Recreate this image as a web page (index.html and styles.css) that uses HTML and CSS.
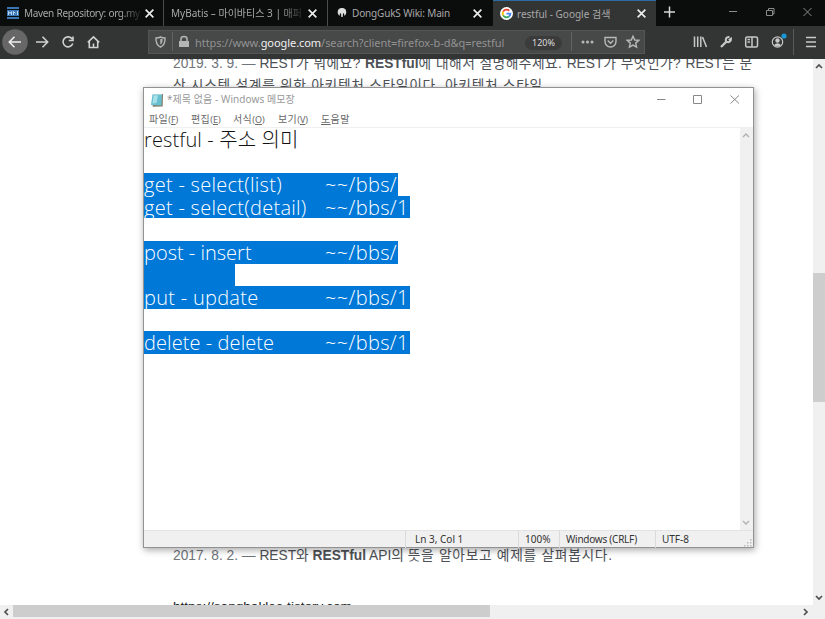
FILE: index.html
```html
<!DOCTYPE html>
<html lang="ko">
<head>
<meta charset="utf-8">
<title>restful - Google 검색</title>
<link rel="stylesheet" href="styles.css">
</head>
<body>
<div class="browser">
  <div class="tabs">
    <div class="tab t1">
      <svg class="fav" viewBox="0 0 12 12"><path fill="#3976b5" d="M0 0h12v2H0zM0 3h12v6H0zM0 10h12v2H0z"/><path stroke="#b9d7f2" fill="none" d="M1.500 8V4.500l1.500 2 1.500-2V8M6.500 8V4.500l2 2M10.500 4v4"/></svg>
      <span class="label fade">Maven Repository: org.my</span>
      <svg class="x" viewBox="0 0 10 10"><path d="M1.500 1.500l7 7m0-7l-7 7"/></svg>
    </div>
    <div class="tab t2">
      <span class="label fade">MyBatis – 마이바티스 3 | 매퍼</span>
      <svg class="x" viewBox="0 0 10 10"><path d="M1.500 1.500l7 7m0-7l-7 7"/></svg>
    </div>
    <div class="tab t3">
      <svg class="fav" viewBox="0 0 12 12"><path fill="#ddd" d="M2 7C1 3 3 1 6 1s5 2 4 6L8.500 9 8 6.500 7 6.200 6.700 10H5.300L5 6.200 4 6.500 3.500 9z"/></svg>
      <span class="label">DongGukS Wiki: Main</span>
      <svg class="x" viewBox="0 0 10 10"><path d="M1.500 1.500l7 7m0-7l-7 7"/></svg>
    </div>
    <div class="tab t4 active">
      <svg class="fav g" viewBox="0 0 14 14"><circle cx="7" cy="7" r="7" fill="#fff"/><g fill="none" stroke-width="2"><path stroke="#ea4335" d="M3.400 5A4.200 4.200 0 0 1 10 4"/><path stroke="#fbbc05" d="M3.400 5a4.200 4.200 0 0 0 0 4"/><path stroke="#34a853" d="M3.400 9A4.200 4.200 0 0 0 9.700 10.200"/><path stroke="#4285f4" d="M9.700 10.200A4.200 4.200 0 0 0 11.200 7.200H7"/></g></svg>
      <span class="label">restful - Google 검색</span>
      <svg class="x" viewBox="0 0 10 10"><path d="M1.500 1.500l7 7m0-7l-7 7"/></svg>
    </div>
    <svg class="winbtns" width="169" height="26" viewBox="656 0 169 26"><path stroke="#d8d8d8" stroke-width="1.500" d="M669.500 6.500v11M664 12h11"/><g fill="none" stroke="#8b8b8b"><path d="M729 11.500h8M766.500 10.500h6v5h-6zM768.500 10V8.500h5.500V14H773M803.500 8l8 8m0-8l-8 8"/></g></svg>
  </div>
  <div class="toolbar">
    <svg class="nav" width="148" height="32" viewBox="0 26 148 32" fill="none" stroke="#d0d0d0" stroke-width="1.600"><circle cx="15" cy="42" r="12.800" fill="#676767" stroke="none"/><path stroke="#eee" d="M21 42H9.500M14.500 36.800L9.300 42l5.200 5.200"/><path d="M36 42h11.500M42.500 36.800l5.200 5.200-5.200 5.200"/><path d="M72.200 39A5 5 0 1 0 72.800 43.500M73 36.500v4h-4.200"/><path d="M87.800 42.300l5.700-5.500 5.700 5.500M89.300 41.500v6h8.400v-6M93.500 47.500v-4"/></svg>
    <div class="url">
      <svg width="47" height="24" viewBox="148 30 47 24"><path fill="none" stroke="#b5b5b5" stroke-width="1.400" d="M156 38q2.500 0 4.500-1 2 1 4.500 1c.3 5-1 7.500-4.500 9.200-3.500-1.700-4.800-4.200-4.500-9.200z"/><path fill="#b5b5b5" d="M160.300 39h2.300c0 3-.5 4.500-2.300 5.500z"/><path stroke="#626262" d="M172.500 32v19"/><path fill="#b5b5b5" d="M179 41h10v6h-10z"/><path fill="none" stroke="#b5b5b5" stroke-width="1.500" d="M181 41v-2a3 2.500 0 0 1 6 0v2"/></svg>
      <span class="addr">https://www.<b>google.com</b>/search?client=firefox-b-d&amp;q=restful</span>
      <span class="zoom">120%</span>
      <svg class="acts" width="76" height="24" viewBox="569 30 76 24" fill="none" stroke="#b8b8b8" stroke-width="1.400"><path stroke="#626262" stroke-width="1" d="M571.500 32v19"/><g fill="#b8b8b8" stroke="none"><circle cx="583" cy="42" r="1.500"/><circle cx="587.500" cy="42" r="1.500"/><circle cx="592" cy="42" r="1.500"/></g><path d="M605 37.500h11v4a5.500 5.500 0 0 1-11 0zM607.700 40.500l2.800 2.700 2.800-2.700"/><path d="M633 36.200l1.700 3.800 4.100.4-3.100 2.700.9 4.100-3.600-2.100-3.600 2.100.9-4.100-3.100-2.700 4.100-.4z"/></svg>
    </div>
    <svg class="tools" width="180" height="32" viewBox="645 26 180 32" fill="none" stroke="#c8c8c8" stroke-width="1.500"><path d="M694.500 36.500v10.500M697.700 36.500v10.500M700.800 36.500v10.500M702.500 37l4 10"/><path stroke-width="2.300" d="M721 47l5.500-5.500"/><path stroke-width="2" d="M729.500 37c-3-.5-4.500 2-3.200 4.700 2.500 1.200 5-.2 4.700-3l-2.200 1.500"/><rect x="745.700" y="37" width="11.800" height="10" rx="1.500"/><path d="M752 37v10M747.500 39.500h2.500M747.500 42h2.500"/><circle cx="777.500" cy="42" r="5.200" stroke-width="1.200"/><circle cx="777.500" cy="40.500" r="2.200" fill="#c8c8c8" stroke="none"/><path fill="#c8c8c8" stroke="none" d="M774 45q3.500-3.500 7 0-3.500 3-7 0z"/><circle cx="784" cy="36" r="2.600" fill="#1898d2" stroke="none"/><path stroke="#5a5a5a" stroke-width="1" d="M793.500 29v26"/><path stroke-width="1.600" d="M806 37.500h10M806 42h10M806 46.500h10"/></svg>
  </div>
</div>
<div class="view">
  <div class="page">
    <p class="r1">2019. 3. 9. — <span class="dk">REST<span class="k">가 뭐에요? </span><b>RESTful</b><span class="k">에 대해서 설명해주세요. </span>REST<span class="k">가 무엇인가? </span>REST<span class="k">는 분</span></span></p>
    <p class="r2">산 시스템 설계를 위한 아키텍처 스타일이다. 아키텍처 스타일</p>
    <p class="r3">2017. 8. 2. — <span class="dk">REST와 <b>RESTful</b> API의 <span class="k2">뜻을 알아보고 예제를 살펴봅시다.</span></span></p>
    <p class="r4">https://sanghaklee.tistory.com <span>› ...</span></p>
  </div>
  <div class="vbar"><svg viewBox="0 0 12 14"><path d="M3 9l3-3 3 3"/></svg><div class="vthumb"></div><svg viewBox="0 0 12 14"><path d="M3 5l3 3 3-3"/></svg></div>
</div>
<div class="hbar"><svg viewBox="0 0 12 14"><path d="M8 4L5 7l3 3"/></svg><div class="hthumb"></div><svg class="right" viewBox="0 0 12 14"><path d="M4 4l3 3-3 3"/></svg></div>

<div class="notepad">
  <div class="title">
    <svg width="14" height="14" viewBox="0 0 14 14"><path fill="#867d68" d="M3 1.500l10-.5-.3 12.500-10 .2z"/><path fill="#68bfd0" d="M2.500 1.200L12 1l-.6 11.500L1 12z"/><path fill="#a7e0e8" d="M3.500 2.500L8 2.300 6.500 10l-4 .5z"/><path stroke="#d8edf0" stroke-dasharray="1 1" d="M2.500 1.500H12"/></svg>
    <span>*제목 없음 - Windows 메모장</span>
    <svg class="wb" width="90" height="20" viewBox="653 89 90 20" fill="none" stroke="#888"><path d="M657 98.500h8.500M693.500 94.500h8v8h-8zM730.500 94.500l8.500 8m0-8l-8.500 8"/></svg>
  </div>
  <div class="menu"><span class="m1">파일<i>(<u>F</u>)</i></span><span class="m2">편집<i>(<u>E</u>)</i></span><span class="m3">서식<i>(<u>O</u>)</i></span><span class="m4">보기<i>(<u>V</u>)</i></span><span class="m5"><u>도</u>움말</span></div>
  <div class="body">
    <div class="text">
      <div class="line head">restful - 주소 의미</div>
      <div class="line"></div>
      <div class="line"><div class="sel"><span class="a">get - select(list)</span><span class="p">~~/bbs/</span></div></div>
      <div class="line"><div class="sel long"><span class="a">get - select(detail)</span><span class="p">~~/bbs/1</span></div></div>
      <div class="line"></div>
      <div class="line"><div class="sel"><span>post - insert</span><span class="p">~~/bbs/</span></div></div>
      <div class="line"><div class="sel tabonly"></div></div>
      <div class="line"><div class="sel long"><span class="a">put - update</span><span class="p">~~/bbs/1</span></div></div>
      <div class="line"></div>
      <div class="line"><div class="sel long"><span class="e">delete - delete</span><span class="p">~~/bbs/1</span></div></div>
    </div>
    <div class="nbar"><svg viewBox="0 0 12 14"><path d="M3 9l3-3 3 3"/></svg><svg viewBox="0 0 12 14"><path d="M3 5l3 3 3-3"/></svg></div>
  </div>
  <div class="status"><span></span><span class="s1">Ln 3, Col 1</span><span class="s2">100%</span><span class="s3">Windows (CRLF)</span><span class="s4">UTF-8</span><svg width="9" height="9" viewBox="0 0 9 9"><path fill="#bbb" d="M6 0h1.500v1.500H6zM3 3h1.500v1.500H3zM6 3h1.500v1.500H6zM0 6h1.500v1.500H0zM3 6h1.500v1.500H3zM6 6h1.500v1.500H6z"/></svg></div>
</div>
</body>
</html>
```
FILE: styles.css
```css
* { box-sizing: border-box; }
body { margin: 0; width: 825px; height: 619px; overflow: hidden; background: #fff; font-family: "Open Sans", "Noto Sans CJK KR", sans-serif; display: flex; flex-direction: column; }
svg { display: block; flex: none; }
p { margin: 0; }
.tabs { height: 26px; background: #0b0c0c; display: flex; }
.tab { display: flex; align-items: center; border-right: 1px solid #4c4c4c; color: #a8a8a8; font: 10px/26px "Noto Sans", "Noto Sans CJK KR", sans-serif; padding-right: 9px; }
.tab .label { flex: 1; white-space: nowrap; overflow: hidden; }
.fade { mask-image: linear-gradient(90deg, #000 80%, transparent 100%); }
.tab.t1 { width: 164px; padding-left: 7px; padding-right: 8px; }
.t1 .label { letter-spacing: -0.350px; word-spacing: 0.500px; }
.t2 { width: 164px; padding-left: 7px; }
.tab.t3 { width: 165px; padding-left: 8px; padding-right: 10px; border: 0; }
.t4 { width: 163px; padding-left: 7px; }
.fav { width: 12px; height: 12px; margin-right: 5px; }
.t3 .fav { margin-right: 4px; }
.t3 .label { letter-spacing: -0.160px; }
.fav.g { width: 13px; height: 13px; margin-right: 4px; }
.x { width: 11px; height: 11px; stroke: #eee; stroke-width: 1.500; }
.active { background: #333434; border: 0; border-top: 1px solid #2b6ca3; }
.toolbar { height: 33px; background: #333434; display: flex; padding-bottom: 1px; }
.url { width: 497px; height: 24px; margin-top: 4px; background: #474848; border: 1px solid #555; display: flex; align-items: center; }
.url svg { margin: -1px 0 0 -1px; }
.addr { font: 11px/22px "Noto Sans", sans-serif; letter-spacing: -0.060px; color: #929292; width: 330px; margin-top: 1px; white-space: nowrap; }
.addr b { font-weight: 400; color: #f0f0f0; }
.zoom { width: 37px; height: 14px; margin-top: 1px; border-radius: 7px; background: #3b3b3b; color: #ddd; font: 9px/14px "Noto Sans", sans-serif; text-align: center; }
.url .acts { margin-left: auto; margin-right: -1px; }
.view { height: 546px; flex: none; display: flex; }
.page { flex: 1; height: 546px; overflow: hidden; padding-left: 173px; font-family: "Liberation Sans", "Noto Sans CJK KR", sans-serif; font-size: 13.750px; line-height: 21px; color: #70757a; white-space: nowrap; }
.page .dk, .r2 { color: #4d5156; }
.r1 { margin-top: -6px; }
.k { letter-spacing: 0.450px; }
.k2 { letter-spacing: 0.700px; }
.r2 { letter-spacing: 0.700px; margin-top: 1px; }
.r3 { margin-top: 449px; }
.r4 { margin-top: 30px; font-size: 13.600px; color: #202124; }
.r4 span { color: #70757a; }
.vbar { width: 12px; background: #f0f0f0; display: flex; flex-direction: column; }
.vbar svg, .hbar svg, .nbar svg { width: 12px; height: 14px; fill: none; stroke: #505050; stroke-width: 1.700; }
.vthumb { height: 129px; margin: 200px 0 auto; background: #cdcdcd; }
.hbar { height: 14px; background: #f0f0f0; display: flex; padding-right: 13px; }
.hthumb { width: 477px; height: 12px; margin-left: 1px; background: #cdcdcd; }
.hbar .right { margin-left: auto; }
.notepad { position: absolute; left: 143px; top: 87px; width: 611px; height: 461px; background: #fff; border: 1px solid #929292; box-shadow: 1px 2px 7px rgba(0,0,0,.35); display: flex; flex-direction: column; }
.title { height: 23px; display: flex; align-items: center; padding-left: 6px; color: #999; font: 10px/23px "Noto Sans", "Noto Sans CJK KR", sans-serif; }
.title span { margin-left: 3px; letter-spacing: 0.080px; }
.wb { margin-left: auto; margin-right: 10px; }
.menu { height: 17px; display: flex; border-bottom: 1px solid #f0f0f0; padding-left: 5px; color: #686868; font: 10px/17px "Noto Sans", "Noto Sans CJK KR", sans-serif; }
.menu span { white-space: nowrap; letter-spacing: 0.400px; }
.menu i { font-style: normal; font-size: 9px; letter-spacing: 0; }
.m1 { width: 42px; } .m2 { width: 42px; } .m3 { width: 45px; } .m4 { width: 43px; }
.body { flex: 1; display: flex; min-height: 0; }
.text { flex: 1; font-family: "Open Sans", "Noto Sans CJK KR", sans-serif; font-weight: 300; font-size: 20px; color: #111; }
.line { height: 22.600px; line-height: 24px; white-space: nowrap; }
.head { letter-spacing: 0.120px; }
.sel { background: #0078d7; color: #fff; width: 254px; height: 22.600px; display: grid; grid-template-columns: 181px 1fr; }
.a { letter-spacing: 0.280px; }
.e { letter-spacing: 0.080px; }
.p { letter-spacing: 0.350px; }
.long { width: 266px; }
.tabonly { width: 91px; }
.nbar { width: 13px; background: #f0f0f0; display: flex; flex-direction: column; justify-content: space-between; }
.nbar svg { stroke: #b0b0b0; stroke-width: 1.300; }
.status { height: 17px; background: #f0f0f0; border-top: 1px solid #e3e3e3; display: grid; grid-template-columns: 261px 113px 41px 96px 90px 9px; color: #333; font: 10px/17px "Noto Sans", sans-serif; }
.status span + span { border-left: 1px solid #dadada; padding-left: 9px; white-space: nowrap; }
.status span.s2, .status span.s3, .status span.s4 { padding-left: 6px; }
.status .s3 { letter-spacing: -0.250px; }
.status svg { margin-top: 8px; margin-left: -1px; }
```
